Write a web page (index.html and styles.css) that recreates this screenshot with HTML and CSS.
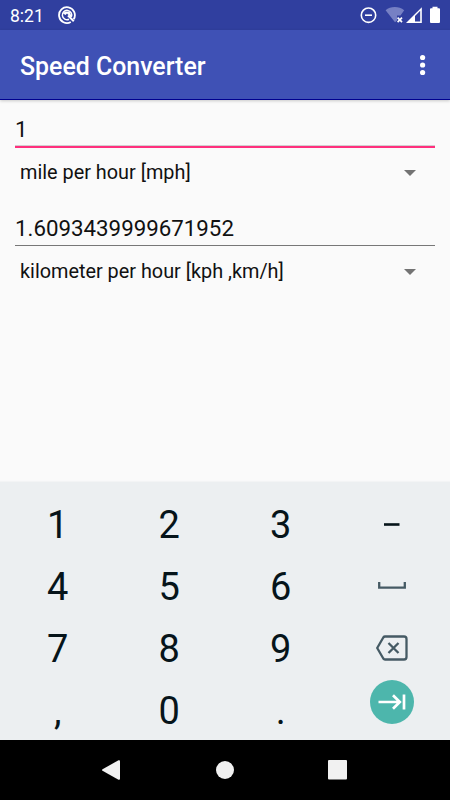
FILE: index.html
```html
<!DOCTYPE html>
<html lang="en">
<head>
  <meta charset="UTF-8">
  <title>Speed Converter</title>
  <link rel="stylesheet" href="styles.css">
</head>
<body>

  <div class="status-bar">
    <span class="clock">8:21</span>
    <svg class="q-icon" width="18" height="18" viewBox="0 0 18 18" fill="none" stroke="#fff">
      <path d="M12.8 16A7.900 7.900 0 1 1 15.700 13.200" stroke-width="1.800"/>
      <path d="M11 13.300A4.700 4.700 0 1 1 13.300 11" stroke-width="1.500"/>
      <path d="M7 5.500H11.500L13 9V11.500L9 7.500L7.500 9L5 7.500Z" fill="#fff" stroke="none"/>
      <path d="M10 9.500L15.800 15.300" stroke-width="2"/>
    </svg>
    <svg class="status-icons" width="84" height="20" viewBox="0 0 84 20">
      <circle cx="8.5" cy="10.2" r="7.2" fill="none" stroke="#fff" stroke-width="1.6"/>
      <path d="M5 10.2h7" stroke="#fff" stroke-width="1.6"/>
      <path d="M25.600 5.200C30.500 1 39 1 44.200 5.200L40.500 10.500H37V15.500L35 17.300Z" fill="#7680c4"/>
      <path d="M37.600 12.700l4.400 4.400M42 12.700l-4.400 4.400" stroke="#fff" stroke-width="1.700"/>
      <path d="M46 18L61.800 2.200V18Z" fill="#fff"/>
      <path d="M55 10.900L60.200 5.700V16.400H55Z" fill="#303f9f"/>
      <path d="M72.500 1.800h5v1.500h1.500q1 0 1 1V17q0 1-1 1h-8q-1 0-1-1V4.300q0-1 1-1h1.500Z" fill="#fff"/>
    </svg>
  </div>

  <div class="toolbar">
    <h1 class="title">Speed Converter</h1>
    <svg class="menu-icon" width="6" height="22" viewBox="0 0 6 22" fill="#fff">
      <circle cx="2.600" cy="3.500" r="2.600"/>
      <circle cx="2.600" cy="11" r="2.600"/>
      <circle cx="2.600" cy="18.500" r="2.600"/>
    </svg>
  </div>

  <div class="converter">
    <div class="field active">1</div>
    <div class="spinner">
      <span>mile per hour [mph]</span>
      <svg width="12" height="6" viewBox="0 0 12 6"><path d="M0 0h12L6 6z" fill="#737373"/></svg>
    </div>
    <div class="field">1.6093439999671952</div>
    <div class="spinner">
      <span>kilometer per hour [kph ,km/h]</span>
      <svg width="12" height="6" viewBox="0 0 12 6"><path d="M0 0h12L6 6z" fill="#737373"/></svg>
    </div>
  </div>

  <div class="keyboard">
    <div class="key">1</div>
    <div class="key">2</div>
    <div class="key">3</div>
    <div class="key symbol">
      <svg width="16" height="3" viewBox="0 0 16 3"><path d="M0 1.500h15.500" stroke="#06141a" stroke-width="2.600"/></svg>
    </div>
    <div class="key">4</div>
    <div class="key">5</div>
    <div class="key">6</div>
    <div class="key symbol">
      <svg width="28" height="8" viewBox="0 0 28 8"><path d="M1.200 0v5.600h25.600V0" fill="none" stroke="#455a64" stroke-width="2.300"/></svg>
    </div>
    <div class="key">7</div>
    <div class="key">8</div>
    <div class="key">9</div>
    <div class="key symbol">
      <svg width="32" height="26" viewBox="0 0 32 26" fill="none" stroke="#455a64" stroke-width="2.300" stroke-linejoin="round">
        <path d="M9 1.500H28q2.500 0 2.500 2.500v18q0 2.500-2.500 2.500H9q-1 0-1.700-1L1.200 13L7.300 2.500q.7-1 1.700-1Z"/>
        <path d="M12.500 8l10 10M22.500 8l-10 10"/>
      </svg>
    </div>
    <div class="key">,</div>
    <div class="key">0</div>
    <div class="key">.</div>
    <div class="key symbol">
      <div class="next">
        <svg width="28" height="18" viewBox="0 0 28 18" fill="none" stroke="#fff" stroke-width="2.700">
          <path d="M.5 9H22M15 2.200L21.800 9L15 15.800"/>
          <path d="M26 1.500v15"/>
        </svg>
      </div>
    </div>
  </div>

  <div class="nav-bar">
    <svg class="back" width="18" height="20" viewBox="0 0 18 20"><path d="M.5 9.200L16.500 .3Q18-.2 18 1.200V18.800Q18 20.200 16.500 19.700L.5 10.800Q-.5 10 .5 9.200Z" fill="#f1f1f1"/></svg>
    <svg width="18" height="18" viewBox="0 0 18 18"><circle cx="9" cy="9" r="9" fill="#f1f1f1"/></svg>
    <svg width="19" height="20" viewBox="0 0 19 20"><rect width="19" height="19.500" rx="1" fill="#f1f1f1"/></svg>
  </div>

</body>
</html>
```
FILE: styles.css
```css
* {
  box-sizing: border-box;
}

body {
  margin: 0;
  width: 450px;
  height: 800px;
  display: flex;
  flex-direction: column;
  overflow: hidden;
  background-color: #fafafa;
  font-family: Roboto, sans-serif;
}

svg {
  display: block;
  flex: none;
}

.status-bar {
  height: 30px;
  padding: 0 6px 0 10px;
  display: flex;
  align-items: center;
  background-color: #303f9f;
  color: #fff;
}

.clock {
  width: 47.5px;
  padding-top: 1px;
  font-size: 17.5px;
}

.status-icons {
  margin-left: auto;
}

.toolbar {
  height: 70px;
  padding: 1px 24px 0 20px;
  display: flex;
  align-items: center;
  justify-content: space-between;
  background-color: #3f51b5;
  border-bottom: 1px solid #00008f;
  box-shadow: 0 1px 3px rgba(0, 0, 0, 0.2);
  color: #fff;
}

.title {
  margin: 0;
  padding-top: 2px;
  font-size: 24.9px;
  font-weight: 500;
}

.converter {
  flex: 1;
  padding: 12px 15px 0;
  color: #111;
}

.field {
  height: 34px;
  line-height: 32px;
  font-size: 22.3px;
  border-bottom: 1px solid #777;
}

.field.active {
  height: 36px;
  line-height: 34px;
  border-bottom: 2px solid #ff2f7d;
  box-shadow: inset 0 -1px #d3cdcf;
}

.spinner {
  height: 49px;
  margin-bottom: 15px;
  padding: 0 19px 0 5px;
  display: flex;
  align-items: center;
  justify-content: space-between;
  font-size: 19.85px;
}

.field:not(.active) + .spinner {
  height: 51px;
}

.keyboard {
  height: 258px;
  padding: 11px 2px 0;
  display: grid;
  grid-template-columns: repeat(4, 1fr);
  grid-auto-rows: 62px;
  background-color: #eceff1;
  box-shadow: 0 -1px 1px #f3f4f5;
}

.key {
  padding-top: 2px;
  display: flex;
  align-items: center;
  justify-content: center;
  color: #06141a;
  font-size: 38px;
}

.key.symbol {
  padding-top: 0;
}

.next {
  width: 44px;
  height: 44px;
  margin-bottom: 16px;
  display: flex;
  align-items: center;
  justify-content: center;
  border-radius: 50%;
  background-color: #4db6ac;
}

.nav-bar {
  height: 60px;
  padding-right: 1px;
  display: flex;
  align-items: center;
  justify-content: center;
  gap: 94px;
  background-color: #000;
}

.back {
  margin-right: 2px;
}
```
